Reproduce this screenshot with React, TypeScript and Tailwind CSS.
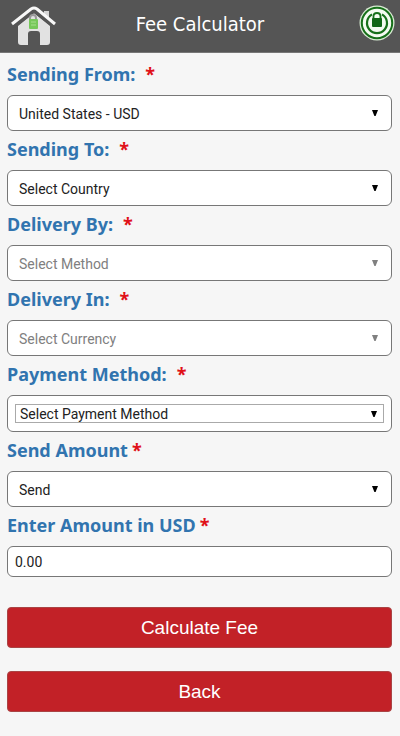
import type { ReactNode } from "react";

const labelClass =
  "flex h-[39px] items-center pb-[3px] text-lg leading-6 font-bold text-[#3174af] [font-family:'Noto_Sans',Tahoma,sans-serif]";
const boxClass =
  "relative flex h-9 items-center rounded-md border border-[#777] bg-white";
const selectClass =
  "h-full w-full appearance-none rounded-md bg-transparent pt-0.5 pr-8 pl-[11px] text-sm text-[#222] outline-none [font-family:Roboto,Arial,sans-serif] disabled:text-[#808080]";

function Required({ wide }: { wide?: boolean }) {
  return (
    <span className={`${wide ? "ml-[10px]" : "ml-1"} font-bold text-[#e01018]`} aria-hidden="true">
      *
    </span>
  );
}

function Arrow({ className }: { className: string }) {
  return (
    <svg
      className={`pointer-events-none absolute ${className}`}
      width="6"
      height="6"
      viewBox="0 0 6 6"
      fill="currentColor"
      aria-hidden="true"
    >
      <path d="M0 0h6L3.6 6H2.4z" />
    </svg>
  );
}

function Label({ id, wide, children }: { id: string; wide?: boolean; children: ReactNode }) {
  return (
    <label htmlFor={id} className={labelClass}>
      {children}
      <Required wide={wide} />
    </label>
  );
}

type SelectFieldProps = {
  id: string;
  label: string;
  option: string;
  disabled?: boolean;
  wide?: boolean;
};

function SelectField({ id, label, option, disabled, wide = true }: SelectFieldProps) {
  return (
    <div>
      <Label id={id} wide={wide}>
        {label}
      </Label>
      <div className={boxClass}>
        <select id={id} disabled={disabled} className={selectClass}>
          <option>{option}</option>
        </select>
        <Arrow className={disabled ? "right-[13px] text-[#808080]" : "right-[13px] text-black"} />
      </div>
    </div>
  );
}

function HomeIcon() {
  return (
    <svg width="46" height="40" viewBox="0 0 46 40" aria-hidden="true">
      <path d="M33 5h5v10l-5-5z" fill="#d5d5d5" />
      <path d="M7 20 23 7l16 13v16q0 3-3 3h-7V28q0-3-3-3h-6q-3 0-3 3v11h-7q-3 0-3-3z" fill="#e2e2e2" />
      <path d="M2 20 23 4l21 16" fill="none" stroke="#555" strokeWidth="5" />
      <path d="M1 18 20 3q3-2 6 0l18 15" fill="none" stroke="#f8f8f8" strokeWidth="3" />
      <path d="M19 14v-2q0-3 3-3t3 3v2" fill="none" stroke="#999" strokeWidth="2" />
      <rect x="18" y="13" width="9" height="10" rx="1" fill="#76c85a" />
      <path d="M20 16h5M20 19h5" stroke="#a6df8e" strokeWidth="1" />
    </svg>
  );
}

function SecureIcon() {
  return (
    <svg width="36" height="36" viewBox="0 0 36 36" aria-hidden="true">
      <circle cx="18" cy="18" r="17.5" fill="#d9ecd4" />
      <circle cx="18" cy="18" r="15.2" fill="#f4fbf1" stroke="#17701a" strokeWidth="2" />
      <path d="M13 9.4a10 10 0 1 0 10 0" fill="none" stroke="#17701a" strokeWidth="2.2" />
      <path d="M14.5 14.5v-3q0-3.5 3.5-3.5t3.5 3.5v3" fill="none" stroke="#17701a" strokeWidth="1.8" />
      <rect x="13" y="13" width="10" height="9" rx="1" fill="#116616" />
    </svg>
  );
}

export default function App() {
  return (
    <div className="min-h-screen bg-[#f6f6f6] [font-family:'Liberation_Sans',Arial,sans-serif]">
      <header className="flex h-[53px] items-center border-b border-[#777] bg-[#555] pr-[5px] pl-[11px]">
        <button type="button" aria-label="Home" className="w-[46px]">
          <HomeIcon />
        </button>
        <h1 className="flex-1 pb-1 text-center text-xl text-white [font-family:'DejaVu_Sans_Condensed',Tahoma,sans-serif]">
          Fee Calculator
        </h1>
        <button type="button" aria-label="Secure connection" className="flex w-[52px] justify-end pb-[7px]">
          <SecureIcon />
        </button>
      </header>

      <form className="pt-[3px] pr-2 pb-6 pl-[7px]">
        <SelectField id="from" label="Sending From:" option="United States - USD" />
        <SelectField id="to" label="Sending To:" option="Select Country" />
        <SelectField id="by" label="Delivery By:" option="Select Method" disabled />
        <SelectField id="in" label="Delivery In:" option="Select Currency" disabled />
        <Label id="payment" wide>
          Payment Method:
        </Label>
        <div className="flex h-[37px] items-center rounded-md border border-[#777] bg-white px-[7px]">
          <div className="relative flex h-[19px] w-full items-center border border-[#aaa]">
            <select
              id="payment"
              className="h-full w-full appearance-none bg-transparent pr-6 pl-1 text-sm leading-4 text-[#222] outline-none [font-family:Roboto,Arial,sans-serif]"
            >
              <option>Select Payment Method</option>
            </select>
            <Arrow className="right-[6px] text-black" />
          </div>
        </div>
        <SelectField id="send" label="Send Amount" option="Send" wide={false} />
        <Label id="amount">Enter Amount in USD</Label>
        <input
          id="amount"
          type="text"
          inputMode="decimal"
          defaultValue="0.00"
          className="block h-[31px] w-full rounded-md border border-[#777] bg-white px-[7px] text-sm text-[#222] outline-none [font-family:Roboto,Arial,sans-serif]"
        />
        <div className="mt-[30px] flex flex-col gap-[23px]">
          <button type="submit" className="h-[41px] rounded border border-[#a44] bg-[#c22127] pt-0.5 text-[19px] text-white">
            Calculate Fee
          </button>
          <button type="button" className="h-[41px] rounded border border-[#a44] bg-[#c22127] pt-0.5 text-[19px] text-white">
            Back
          </button>
        </div>
      </form>
    </div>
  );
}
